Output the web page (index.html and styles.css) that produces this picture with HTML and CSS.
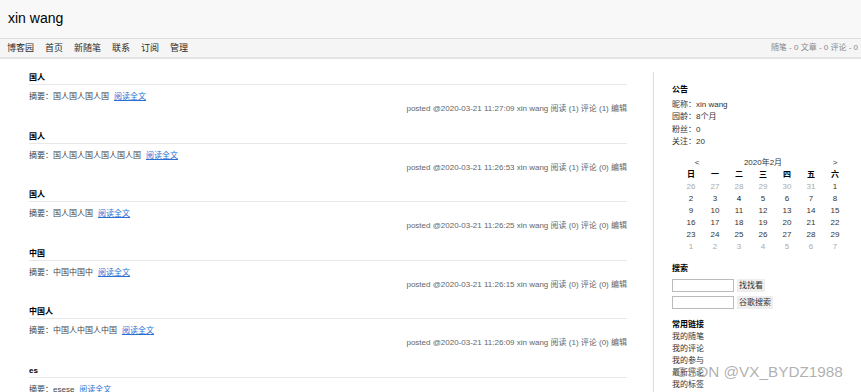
FILE: index.html
```html
<!DOCTYPE html>
<html lang="zh-CN">
<head>
  <meta charset="UTF-8">
  <meta name="viewport" content="width=device-width, initial-scale=1.0">
  <title>xin wang - 博客园</title>
  <link rel="stylesheet" href="styles.css">
</head>
<body>
  <header class="top">
    <h1 class="blog-title">xin wang</h1>
  </header>

  <nav class="navbar">
    <ul class="nav-links">
      <li><a href="#">博客园</a></li>
      <li><a href="#">首页</a></li>
      <li><a href="#">新随笔</a></li>
      <li><a href="#">联系</a></li>
      <li><a href="#">订阅</a></li>
      <li><a href="#">管理</a></li>
    </ul>
    <div class="blog-stats">随笔 - 0 文章 - 0 评论 - 0</div>
  </nav>

  <div class="page">
    <main class="posts">
      <article class="post">
        <h2 class="post-title">国人</h2>
        <p class="post-summary">摘要：国人国人国人国<a href="#" class="more">阅读全文</a></p>
        <p class="post-meta">posted @2020-03-21 11:27:09 xin wang 阅读 (1) 评论 (1) 编辑</p>
      </article>
      <article class="post">
        <h2 class="post-title">国人</h2>
        <p class="post-summary">摘要：国人国人国人国人国人国<a href="#" class="more">阅读全文</a></p>
        <p class="post-meta">posted @2020-03-21 11:26:53 xin wang 阅读 (1) 评论 (0) 编辑</p>
      </article>
      <article class="post">
        <h2 class="post-title">国人</h2>
        <p class="post-summary">摘要：国人国人国<a href="#" class="more">阅读全文</a></p>
        <p class="post-meta">posted @2020-03-21 11:26:25 xin wang 阅读 (0) 评论 (0) 编辑</p>
      </article>
      <article class="post">
        <h2 class="post-title">中国</h2>
        <p class="post-summary">摘要：中国中国中<a href="#" class="more">阅读全文</a></p>
        <p class="post-meta">posted @2020-03-21 11:26:15 xin wang 阅读 (0) 评论 (0) 编辑</p>
      </article>
      <article class="post">
        <h2 class="post-title">中国人</h2>
        <p class="post-summary">摘要：中国人中国人中国<a href="#" class="more">阅读全文</a></p>
        <p class="post-meta">posted @2020-03-21 11:26:09 xin wang 阅读 (1) 评论 (0) 编辑</p>
      </article>
      <article class="post">
        <h2 class="post-title">es</h2>
        <p class="post-summary">摘要：esese<a href="#" class="more">阅读全文</a></p>
        <p class="post-meta">posted @2020-03-21 11:25:58 xin wang 阅读 (0) 评论 (0) 编辑</p>
      </article>
    </main>

    <aside class="sidebar">
      <section class="side-block">
        <h3>公告</h3>
        <p>昵称：xin wang</p>
        <p>园龄：8个月</p>
        <p>粉丝：0</p>
        <p>关注：20</p>
      </section>

      <section class="calendar">
        <div class="cal-head">
          <a href="#" class="prev">&lt;</a>
          <span class="cal-title">2020年2月</span>
          <a href="#" class="next">&gt;</a>
        </div>
        <div class="cal-grid">
          <b>日</b><b>一</b><b>二</b><b>三</b><b>四</b><b>五</b><b>六</b>
          <span class="other">26</span><span class="other">27</span><span class="other">28</span><span class="other">29</span><span class="other">30</span><span class="other">31</span><span>1</span>
          <span>2</span><span>3</span><span class="today">4</span><span>5</span><span>6</span><span>7</span><span>8</span>
          <span>9</span><span>10</span><span>11</span><span>12</span><span>13</span><span>14</span><span>15</span>
          <span>16</span><span>17</span><span>18</span><span>19</span><span>20</span><span>21</span><span>22</span>
          <span>23</span><span>24</span><span>25</span><span>26</span><span>27</span><span>28</span><span>29</span>
          <span class="other">1</span><span class="other">2</span><span class="other">3</span><span class="other">4</span><span class="other">5</span><span class="other">6</span><span class="other">7</span>
        </div>
      </section>

      <section class="side-block search">
        <h3>搜索</h3>
        <div class="search-row"><input type="text"><button>找找看</button></div>
        <div class="search-row"><input type="text"><button>谷歌搜索</button></div>
      </section>

      <section class="side-block links">
        <h3>常用链接</h3>
        <ul>
          <li><a href="#">我的随笔</a></li>
          <li><a href="#">我的评论</a></li>
          <li><a href="#">我的参与</a></li>
          <li><a href="#">最新评论</a></li>
          <li><a href="#">我的标签</a></li>
        </ul>
      </section>
    </aside>
  </div>

  <div class="watermark">CSDN @VX_BYDZ1988</div>
</body>
</html>
```

FILE: styles.css
```css
*, *::before, *::after { box-sizing: border-box; margin: 0; padding: 0; }
html, body { height: 100%; overflow: hidden; }
body { font-family: "Liberation Sans", "Noto Sans CJK SC", sans-serif; font-size: 8px; line-height: 12px; background: #fff; color: #333; position: relative; }
a { color: #333; text-decoration: none; }

.top { height: 39px; background: #f8f8f8; border-bottom: 1px solid #dcdcdc; display: flex; align-items: center; padding: 0 8px; }
.blog-title { font-size: 14px; font-weight: normal; color: #000; line-height: 18px; margin-top: -2px; }

.navbar { height: 20px; background: #f5f5f5; border-bottom: 2px solid #e4e4e4; display: flex; justify-content: space-between; align-items: center; padding: 0 3px 0 7px; }
.nav-links { list-style: none; display: flex; gap: 11px; }
.nav-links a { font-size: 9px; color: #2a2a2a; }
.blog-stats { color: #888; }

.page { display: flex; height: calc(100% - 59px); }

.posts { width: 627px; padding: 13px 0 0 29px; flex-shrink: 0; }
.post { margin-bottom: 15.6px; }
.post-title { font-size: 8px; font-weight: bold; color: #000; line-height: 12px; padding-bottom: 0; border-bottom: 1px solid #e8e8e8; }
.post-summary { margin-top: 6px; color: #444; }
.more { color: #2a6fd4; text-decoration: underline; margin-left: 5px; }
.post-meta { text-align: right; color: #666; }

.sidebar { flex: 1; margin: 13px 0 0 26px; border-left: 1px solid #ddd; padding: 12px 0 0 18px; }
.side-block h3 { font-size: 8px; font-weight: bold; color: #000; line-height: 12px; margin-bottom: 3px; }
.side-block p { line-height: 12.3px; }

.calendar { margin: 9px 0 0 7px; width: 168px; }
.cal-head { display: grid; grid-template-columns: 24px 1fr 24px; text-align: center; }
.cal-head .prev { padding-left: 12px; }
.cal-grid { display: grid; grid-template-columns: repeat(7, 24px); text-align: center; }
.cal-grid b { color: #000; }
.cal-grid .other { color: #aaa; }
.cal-grid .today { color: #000; }

.search { margin-top: 10px; }
.search h3 { margin-bottom: 4px; }
.search-row { display: flex; gap: 3px; margin-bottom: 4px; }
.search-row input { width: 62px; height: 13px; border: 1px solid #bbb; background: #fff; }
.search-row button { height: 13px; padding: 0 2px; border: none; background: #eee; font: inherit; font-size: 8px; line-height: 13px; color: #333; }

.links { margin-top: 10px; }
.links h3 { margin-bottom: 0; }
.links ul { list-style: none; }

.watermark { position: absolute; left: 676px; top: 362px; font-size: 15.3px; line-height: 20px; color: rgba(150, 150, 150, 0.75); white-space: nowrap; pointer-events: none; }
```
